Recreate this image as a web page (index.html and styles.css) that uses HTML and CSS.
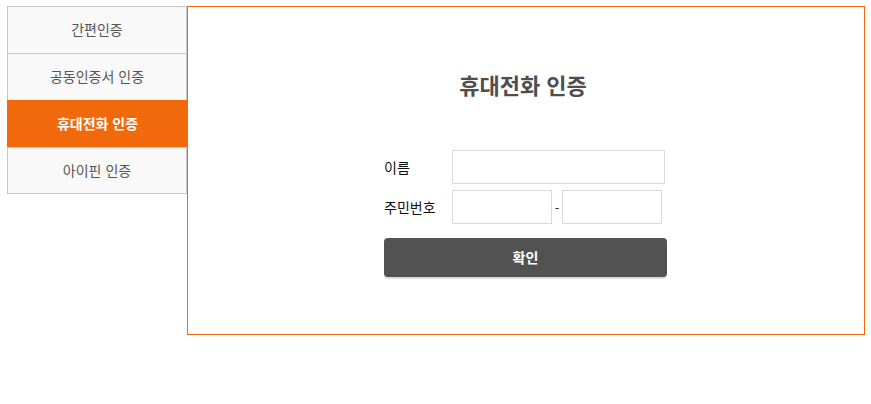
FILE: index.html
```html
<!DOCTYPE html>
<html lang="ko">
<head>
<meta charset="utf-8">
<title>휴대전화 인증</title>
<link rel="stylesheet" href="styles.css">
</head>
<body>
<div class="wrap">
  <ul class="tabs">
    <li class="tab">간편인증</li>
    <li class="tab">공동인증서 인증</li>
    <li class="tab active">휴대전화 인증</li>
    <li class="tab last">아이핀 인증</li>
  </ul>
  <div class="panel">
    <h2 class="title">휴대전화 인증</h2>
    <form class="form">
      <div class="row">
        <label class="label">이름</label>
        <input class="input wide" type="text">
      </div>
      <div class="row">
        <label class="label">주민번호</label>
        <input class="input half" type="text">
        <span class="dash">-</span>
        <input class="input half" type="text">
      </div>
      <button type="button" class="btn">확인</button>
    </form>
  </div>
</div>
</body>
</html>
```
FILE: styles.css
```css
* { box-sizing: border-box; }
body {
  margin: 0;
  background: #fff;
  font-family: "Noto Sans CJK KR", "Noto Sans", sans-serif;
}
.wrap {
  display: flex;
  align-items: flex-start;
  padding: 6px 6px 0 7px;
}
.tabs {
  list-style: none;
  margin: 0;
  padding: 0;
  width: 180px;
  flex: none;
  position: relative;
  z-index: 1;
}
.tab {
  height: 47px;
  border: 1px solid #c8c8c8;
  border-bottom: none;
  background: #f9f9f9;
  color: #555;
  font-size: 14px;
  line-height: 45px;
  text-align: center;
}
.tab.last {
  height: 47px;
  border-bottom: 1px solid #c8c8c8;
}
.tab.active {
  background: #f2690b;
  border-color: #f2690b;
  color: #fff;
  font-weight: bold;
  margin-right: -1px;
}
.panel {
  width: 678px;
  height: 329px;
  flex: none;
  border: 1px solid #f2690b;
  padding-top: 63px;
}
.title {
  margin: 0 0 51px;
  padding-right: 6px;
  font-size: 22px;
  line-height: 29px;
  font-weight: bold;
  color: #4e4e4e;
  text-align: center;
}
.form {
  width: 283px;
  margin: 0 0 0 196px;
}
.row {
  display: flex;
  align-items: center;
  margin-bottom: 6px;
}
.label {
  width: 68px;
  font-size: 14px;
  color: #111;
}
.input {
  height: 34px;
  border: 1px solid #d9d9d9;
  background: #fff;
  margin: 0;
  padding: 0 6px;
  font: inherit;
}
.input.wide { width: 213px; }
.input.half { width: 100px; }
.dash {
  width: 10px;
  text-align: center;
  font-size: 13px;
  color: #333;
}
.btn {
  display: block;
  width: 283px;
  height: 39px;
  margin-top: 14px;
  border: none;
  border-radius: 4px;
  background: #525252;
  color: #fff;
  font: inherit;
  font-size: 14px;
  font-weight: bold;
  line-height: 37px;
  box-shadow: 0 2px 0 #dcdcdc;
  cursor: pointer;
}
```
